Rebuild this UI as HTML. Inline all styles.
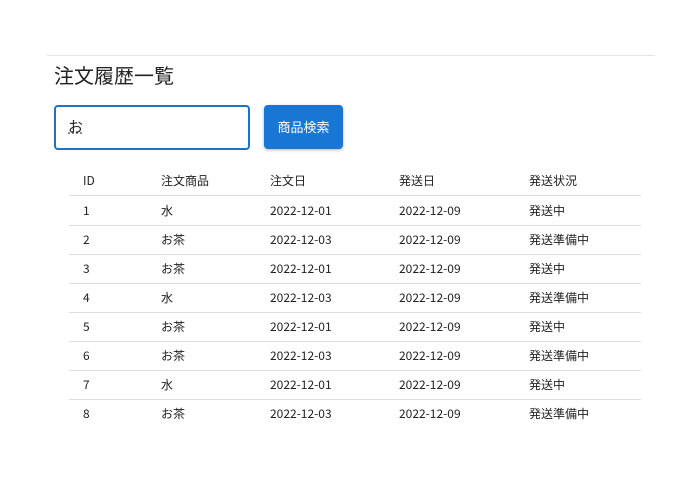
<!DOCTYPE html>
<html><head><meta charset="utf-8"><style>
body{margin:0;width:685px;height:480px;background:#fff;font-family:"Liberation Sans","Noto Sans CJK JP",sans-serif;color:#222;position:relative;overflow:hidden}
.hr{position:absolute;left:47px;top:55px;width:608px;height:1px;background:#e4e4e4}
h1{position:absolute;left:54px;top:60px;margin:0;font-size:20px;line-height:30px;font-weight:normal;color:#222;font-family:"Noto Sans CJK JP",sans-serif}
.inp{position:absolute;left:54px;top:105px;width:192px;height:41px;border:2px solid #1a73c8;border-radius:4px;box-sizing:content-box}
.inp span{position:absolute;left:12px;top:8px;font-size:15px;line-height:24px;text-decoration:underline dotted #666;font-family:"Noto Sans CJK JP",sans-serif}
.btn{position:absolute;left:264px;top:105px;width:79px;height:44px;background:#1976d2;border-radius:4px;color:#fff;font-size:13px;text-align:center;line-height:44px;box-shadow:0 1px 3px rgba(0,0,0,.3);font-family:"Noto Sans CJK JP",sans-serif}
.row{position:absolute;left:69px;width:572px;height:29px;border-bottom:1px solid #ddd;font-size:12px;font-family:"Noto Sans CJK JP",sans-serif}
.row span{position:absolute;top:0;line-height:29px}
</style></head><body>
<div class="hr"></div>
<h1>注文履歴一覧</h1>
<div class="inp"><span>お</span></div>
<div class="btn">商品検索</div>
<div class="row" style="top:166px"><span style="left:14px">ID</span><span style="left:92px">注文商品</span><span style="left:201px">注文日</span><span style="left:330px">発送日</span><span style="left:460px">発送状況</span></div>
<div class="row" style="top:196px"><span style="left:14px">1</span><span style="left:92px">水</span><span style="left:201px">2022-12-01</span><span style="left:330px">2022-12-09</span><span style="left:460px">発送中</span></div>
<div class="row" style="top:225px"><span style="left:14px">2</span><span style="left:92px">お茶</span><span style="left:201px">2022-12-03</span><span style="left:330px">2022-12-09</span><span style="left:460px">発送準備中</span></div>
<div class="row" style="top:254px"><span style="left:14px">3</span><span style="left:92px">お茶</span><span style="left:201px">2022-12-01</span><span style="left:330px">2022-12-09</span><span style="left:460px">発送中</span></div>
<div class="row" style="top:283px"><span style="left:14px">4</span><span style="left:92px">水</span><span style="left:201px">2022-12-03</span><span style="left:330px">2022-12-09</span><span style="left:460px">発送準備中</span></div>
<div class="row" style="top:312px"><span style="left:14px">5</span><span style="left:92px">お茶</span><span style="left:201px">2022-12-01</span><span style="left:330px">2022-12-09</span><span style="left:460px">発送中</span></div>
<div class="row" style="top:341px"><span style="left:14px">6</span><span style="left:92px">お茶</span><span style="left:201px">2022-12-03</span><span style="left:330px">2022-12-09</span><span style="left:460px">発送準備中</span></div>
<div class="row" style="top:370px"><span style="left:14px">7</span><span style="left:92px">水</span><span style="left:201px">2022-12-01</span><span style="left:330px">2022-12-09</span><span style="left:460px">発送中</span></div>
<div class="row" style="top:399px;border-bottom:none"><span style="left:14px">8</span><span style="left:92px">お茶</span><span style="left:201px">2022-12-03</span><span style="left:330px">2022-12-09</span><span style="left:460px">発送準備中</span></div>
</body></html>
